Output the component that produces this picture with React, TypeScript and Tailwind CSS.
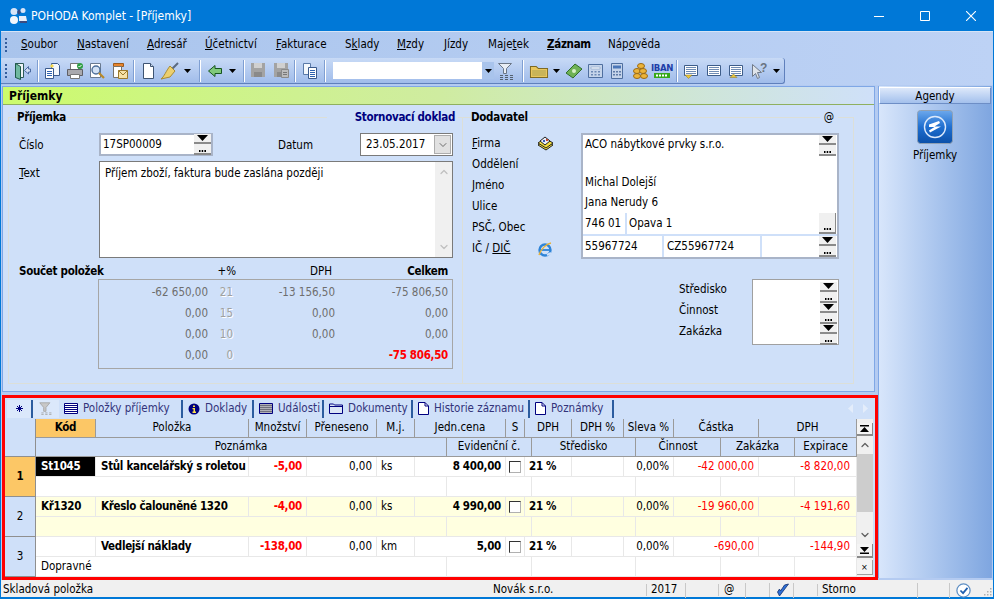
import type { ReactNode } from 'react';
import { ChevronDown, ChevronUp } from 'lucide-react';

function Pair() {
  return (
    <div className="flex w-[17px] flex-col">
      <div className="flex h-[10px] items-center justify-center border-b-2 border-[#8a8a8a] bg-[#f0f0f0]">
        <svg width="11" height="6" viewBox="0 0 11 6"><path d="M0 0h11L5.500 6z" fill="#000" /></svg>
      </div>
      <Dots />
    </div>
  );
}

function Dots() {
  return (
    <div className="flex h-[11px] items-end justify-center border-b-2 border-[#8a8a8a] bg-[#f0f0f0] pb-[1px]">
      <svg width="7" height="2" viewBox="0 0 7 2"><path d="M0 0h1.500v2H0zM2.700 0h1.500v2H2.700zM5.400 0H7v2H5.400z" fill="#000" /></svg>
    </div>
  );
}

function Caret() {
  return (
    <div className="flex h-[22px] w-[12px] items-center justify-center">
      <svg width="7" height="4" viewBox="0 0 7 4"><path d="M0 0h7L3.500 4z" fill="#000" /></svg>
    </div>
  );
}

function Sep({ className = '' }: { className?: string }) {
  return <div className={`mx-[2px] h-[22px] w-[2px] border-l border-r border-l-[#7f9fd2] border-r-white ${className}`} />;
}

function Tool({ children, className = 'w-[22px]' }: { children: ReactNode; className?: string }) {
  return <div className={`flex h-[22px] items-center justify-center ${className}`}>{children}</div>;
}

const outline = '#3a5a8c';

function DoorIcon() {
  return (
    <svg width="18" height="18" viewBox="0 0 18 18">
      <path d="M2.500 1.500h8v14h-8z" fill="#eef3f8" stroke="#2d5a58" />
      <path d="M2.500 1.500l5 3v13l-5-2z" fill="#6fb8a0" stroke="#1e5a48" />
      <path d="M11.500 8.500l4-4v2.500h2v3h-2V12z" fill="#cfdcf2" stroke="#4a6aa0" />
    </svg>
  );
}

function PropsIcon() {
  return (
    <svg width="18" height="18" viewBox="0 0 18 18">
      <path d="M8.500 1.500h6l2 2v10h-8z" fill="#f4f8fc" stroke={outline} />
      <path d="M2.500 6.500h8v10h-8z" fill="#fff" stroke={outline} />
      <path d="M4 9.500h5M4 11.500h5M4 13.500h5" stroke="#2e62b0" />
      <path d="M9 2l2 2-2 2-2-2z" fill="#f6d84a" />
    </svg>
  );
}

function PrintIcon() {
  return (
    <svg width="18" height="18" viewBox="0 0 18 18">
      <path d="M4.500 1.500h8v6h-8z" fill="#fff" stroke="#777" />
      <path d="M1.500 7.500h15v6h-15z" fill="#a9a9ae" stroke="#5f5f66" />
      <path d="M4.500 12.500h9v4h-9z" fill="#fff" stroke="#777" />
      <circle cx="14" cy="4" r="3" fill="#2f9e44" />
      <path d="M12.500 4l1 1 2-2" stroke="#fff" fill="none" />
    </svg>
  );
}

function PreviewIcon() {
  return (
    <svg width="18" height="18" viewBox="0 0 18 18">
      <path d="M2.500 1.500h10v14h-10z" fill="#fff" stroke="#6a7a90" />
      <circle cx="8" cy="8" r="4" fill="#d3e2f5" stroke="#4d6f9a" strokeWidth="1.400" />
      <path d="M11 11l5 5" stroke="#b8892a" strokeWidth="2.200" />
    </svg>
  );
}

function MailDocIcon() {
  return (
    <svg width="18" height="18" viewBox="0 0 18 18">
      <path d="M2.500 1.500h10v3h-10z" fill="#e8842c" stroke="#9c5a1c" />
      <path d="M2.500 4.500h8v11h-8z" fill="#fff" stroke="#77726a" />
      <path d="M7.500 8.500h9v8h-9z" fill="#f7e2a8" stroke="#9c7a2c" />
      <path d="M7.500 8.500l4.500 4.500 4.500-4.500" fill="none" stroke="#9c7a2c" />
    </svg>
  );
}

function PageIcon() {
  return (
    <svg width="18" height="18" viewBox="0 0 18 18">
      <path d="M4.500 1.500h7l3 3v12h-10z" fill="#fff" stroke="#3d5372" />
      <path d="M11.500 1.500v3h3" fill="#cad8ea" stroke="#3d5372" />
    </svg>
  );
}

function BroomIcon() {
  return (
    <svg width="20" height="18" viewBox="0 0 20 18">
      <path d="M12 7l6-6" stroke="#5a6a80" strokeWidth="2" />
      <path d="M10 4l5 5-5 6-9 2c3-2 5-8 9-13z" fill="#eccf6e" stroke="#a88b34" />
    </svg>
  );
}

function BackIcon() {
  return (
    <svg width="16" height="14" viewBox="0 0 16 14">
      <path d="M1.500 7L8 1.500v3h6.500v5H8v3z" fill="#7fc97a" stroke="#16541f" />
    </svg>
  );
}

function SaveIcon({ extra }: { extra?: boolean }) {
  return (
    <svg width="15" height="15" viewBox="0 0 15 15">
      <path d="M0 0h14v14H0z" fill="#a3a3a3" />
      <path d="M3 0h8v5H3z" fill="#d0d0d0" />
      <path d="M3 9h8v5H3z" fill="#8a8a8a" />
      {extra && <path d="M7.500 6.500h7v8h-7z" fill="#bcbcbc" stroke="#8a8a8a" />}
      {extra && <path d="M9 9.500h4M9 11.500h4" stroke="#777" />}
    </svg>
  );
}

function CopyIcon() {
  return (
    <svg width="18" height="18" viewBox="0 0 18 18">
      <path d="M2.500 1.500h7v11h-7z" fill="#f4f8fc" stroke="#5a7aa8" />
      <path d="M7.500 5.500h8v11h-8z" fill="#fff" stroke={outline} />
      <path d="M9 8.500h5M9 10.500h5M9 12.500h5M9 14.500h5" stroke="#2e62b0" />
    </svg>
  );
}

function FilterIcon() {
  return (
    <svg width="18" height="18" viewBox="0 0 18 18">
      <path d="M1.500 1.500h13l-5 5v5h-3v-5z" fill="#e8edf4" stroke="#6b7686" />
      <path d="M3 13.500h3M8 13.500h3M13 13.500h3M3 15.500h3M8 15.500h3M13 15.500h3M3 17.500h3M8 17.500h3M13 17.500h3" stroke="#54606e" />
    </svg>
  );
}

function FolderIcon() {
  return (
    <svg width="16" height="14" viewBox="0 0 16 14" className="scale-x-[1.15]">
      <path d="M.5 2.500h5l2 2h8v9H.5z" fill="#e9c65c" stroke="#7d6a24" />
      <path d="M2 6h12v6H2z" fill="#c9b458" />
    </svg>
  );
}

function MoneyIcon() {
  return (
    <svg width="18" height="18" viewBox="0 0 18 18">
      <path d="M1 11l9-9 7 5-9 9z" fill="#6fb255" stroke="#2f6d2a" />
      <circle cx="9" cy="9" r="2" fill="#d9f0c8" />
    </svg>
  );
}

function CalcIcon({ dark }: { dark?: boolean }) {
  if (dark) {
    return (
      <svg width="14" height="16" viewBox="0 0 14 16">
        <path d="M.5.500h11v15H.5z" fill="#c5d4ea" stroke="#4f6f9f" />
        <path d="M2 2.500h8v3H2z" fill="#4a76b8" />
        <path d="M2 8h2v1.500H2zM5 8h2v1.500H5zM8 8h2v1.500H8zM2 11h2v1.500H2zM5 11h2v1.500H5zM8 11h2v1.500H8z" fill="#5f7ba8" />
      </svg>
    );
  }
  return (
    <svg width="16" height="14" viewBox="0 0 16 14">
      <path d="M.5.500h14v13H.5z" fill="#c5d4ea" stroke="#4f6f9f" />
      <path d="M3 3h9v2H3z" fill="#eef3fa" stroke="#7a94bd" strokeWidth=".5" />
      <path d="M3 7h2v1.500H3zM6.500 7h2v1.500h-2zM10 7h2v1.500h-2zM3 10h2v1.500H3zM6.500 10h2v1.500h-2zM10 10h2v1.500h-2z" fill="#6d89b5" />
    </svg>
  );
}

function CoinsIcon() {
  return (
    <svg width="18" height="18" viewBox="0 0 18 18">
      <ellipse cx="10" cy="4" rx="3.500" ry="2.500" fill="#ecb43a" stroke="#9a6a14" />
      <ellipse cx="6" cy="9" rx="3.500" ry="2.500" fill="#ecb43a" stroke="#9a6a14" />
      <ellipse cx="12" cy="9" rx="3.500" ry="2.500" fill="#ecb43a" stroke="#9a6a14" />
      <ellipse cx="6" cy="14" rx="3.500" ry="2.500" fill="#ecb43a" stroke="#9a6a14" />
      <ellipse cx="13" cy="14" rx="3.500" ry="2.500" fill="#ecb43a" stroke="#9a6a14" />
    </svg>
  );
}

function IbanIcon() {
  return (
    <div className="flex flex-col items-center leading-none">
      <span className="text-[9.5px] font-bold tracking-[-0.4px] text-[#1f3fa8]">IBAN</span>
      <svg width="16" height="5" viewBox="0 0 16 5" className="mt-[1px]">
        <path d="M0 0h16v5H0z" fill="#36a818" />
        <path d="M2 1.500h2v2H2zM5 1.500h2v2H5zM8 1.500h2v2H8zM11 1.500h2v2h-2z" fill="#fff" />
      </svg>
    </div>
  );
}

function ListIcon({ marker }: { marker?: 'down' | 'up' }) {
  return (
    <svg width="16" height="16" viewBox="0 0 16 16">
      <path d="M1.500 2.500h13v10h-13z" fill="#fff" stroke="#3d5d8a" />
      <path d="M3 4.500h10M3 6.500h10M3 8.500h10M3 10.500h10" stroke="#6f8cb4" />
      {marker === 'down' && <path d="M2 12h7l-3.500 3.500z" fill="#e8c53c" stroke="#8c7620" strokeWidth=".5" />}
      {marker === 'up' && <path d="M2 14.500h7L5.500 11z" fill="#e8c53c" stroke="#8c7620" strokeWidth=".5" />}
    </svg>
  );
}

function HelpIcon() {
  return (
    <svg width="18" height="18" viewBox="0 0 18 18">
      <path d="M2.500 2.500v12l3-3 2 5 2-1-2-5h4z" fill="#dfe4ea" stroke="#707a88" />
      <text x="10" y="10" fontSize="12" fontWeight="700" fill="#6a7482" fontFamily="Liberation Sans, sans-serif">?</text>
    </svg>
  );
}

function CardsIcon() {
  return (
    <svg width="17" height="17" viewBox="0 0 17 17">
      <path d="M1 10l7-5 8 5-7 5z" fill="#f2dc3c" stroke="#222" />
      <path d="M1 8l7-5 8 5-7 5z" fill="#f2dc3c" stroke="#222" />
      <path d="M3 6l5-4 5 4-5 4z" fill="#e8eefa" stroke="#222" />
      <path d="M6 5h2v2H6z" fill="#3a5ab8" />
      <path d="M9 4h2v2H9z" fill="#c8452c" />
    </svg>
  );
}

function IeIcon() {
  return (
    <svg width="16" height="16" viewBox="0 0 16 16">
      <circle cx="8" cy="9" r="5.500" fill="none" stroke="#2e84d8" strokeWidth="2.400" />
      <path d="M3 9h11" stroke="#2e84d8" strokeWidth="1.800" />
      <path d="M10 14l4-2" stroke="#cfe0f9" strokeWidth="2" />
      <path d="M2 14c2-6 7-11 12-12" fill="none" stroke="#e8b23a" strokeWidth="1.400" />
    </svg>
  );
}

function AgendaIcon() {
  return (
    <svg width="36" height="34" viewBox="0 0 36 34">
      <defs>
        <linearGradient id="ag" x1="0" y1="0" x2="0" y2="1">
          <stop offset="0" stopColor="#6da8ec" />
          <stop offset=".5" stopColor="#1f6fd0" />
          <stop offset="1" stopColor="#0b4fa8" />
        </linearGradient>
      </defs>
      <rect x=".5" y=".5" width="35" height="33" rx="3" fill="url(#ag)" stroke="#8fa0b4" />
      <circle cx="18" cy="17" r="10.500" fill="none" stroke="#dce9fb" strokeWidth="1.400" />
      <path d="M12 14.500l10-3.500 1 2-5.500 3.500H24l-11 6-1-2 5.500-3.500H12z" fill="#fff" />
    </svg>
  );
}

function TabIcon({ kind }: { kind: string }) {
  if (kind === 'lines') {
    return (
      <svg width="14" height="11" viewBox="0 0 14 11">
        <path d="M.5.500h13v10H.5z" fill="#fff" stroke="#00007f" />
        <path d="M1 2.500h12M1 4.500h12M1 6.500h12M1 8.500h12" stroke="#00007f" />
      </svg>
    );
  }
  if (kind === 'info') {
    return (
      <svg width="12" height="12" viewBox="0 0 12 12">
        <circle cx="6" cy="6" r="5.500" fill="#00007f" />
        <path d="M5 2.500h2v1.500H5zM4.500 5H7v3.500h1V10H4.500V8.500h1V6.300h-1z" fill="#ffe14a" />
      </svg>
    );
  }
  if (kind === 'gray') {
    return (
      <svg width="14" height="11" viewBox="0 0 14 11">
        <path d="M.5.500h13v10H.5z" fill="#b0b0b8" stroke="#00007f" />
        <path d="M1 2.500h12M1 4.500h12M1 6.500h12M1 8.500h12" stroke="#70707c" />
      </svg>
    );
  }
  if (kind === 'folder') {
    return (
      <svg width="14" height="11" viewBox="0 0 14 11">
        <path d="M.5 2V1h4l1 1h8v8.500H.5z" fill="#dbe5f5" stroke="#00007f" />
        <path d="M1 3.500h12" stroke="#00007f" />
      </svg>
    );
  }
  return (
    <svg width="11" height="13" viewBox="0 0 11 13">
      <path d="M.5.500h6.500l3.500 3.500v8.500H.5z" fill="#fff" stroke="#00007f" />
      <path d="M7 .5V4h3.500" fill="none" stroke="#00007f" />
    </svg>
  );
}

const menu: [ReactNode, string, string?][] = [
  [<><u>S</u>oubor</>, 'w-[56px]'],
  [<><u>N</u>astavení</>, 'w-[70px]'],
  [<><u>A</u>dresář</>, 'w-[58px]'],
  [<><u>Ú</u>četnictví</>, 'w-[71px]'],
  [<><u>F</u>akturace</>, 'w-[69px]'],
  [<>S<u>k</u>lady</>, 'w-[52px]'],
  [<><u>M</u>zdy</>, 'w-[47px]'],
  [<><u>J</u>ízdy</>, 'w-[44px]'],
  [<>Maje<u>t</u>ek</>, 'w-[59px]'],
  [<><u>Z</u>áznam</>, 'w-[61px]', 'font-bold tracking-[-0.3px]'],
  [<>Náp<u>o</u>věda</>, 'w-[70px]'],
];

const tabs = [
  { icon: 'lines', label: 'Položky příjemky', w: 'w-[124px]' },
  { icon: 'info', label: 'Doklady', w: 'w-[71px]' },
  { icon: 'gray', label: 'Události', w: 'w-[70px]' },
  { icon: 'folder', label: 'Dokumenty', w: 'w-[89px]' },
  { icon: 'doc', label: 'Historie záznamu', w: 'w-[117px]' },
  { icon: 'doc', label: 'Poznámky', w: 'w-[84px]' },
];

const topCols = 'grid-cols-[60px_153px_58px_70px_38px_91px_19px_47px_52px_50px_85px_98px]';
const bottomCols = 'grid-cols-[411px_85px_104px_85px_74px_62px]';

const head1 = ['Kód', 'Položka', 'Množství', 'Přeneseno', 'M.j.', 'Jedn.cena', 'S', 'DPH', 'DPH %', 'Sleva %', 'Částka', 'DPH'];
const head2 = ['Poznámka', 'Evidenční č.', 'Středisko', 'Činnost', 'Zakázka', 'Expirace'];

const rows = [
  { n: '1', kod: 'St1045', name: 'Stůl kancelářský s roletou', qty: '-5,00', mj: 'ks', price: '8 400,00', sum: '-42 000,00', dph: '-8 820,00', note: '', bg: 'bg-white' },
  { n: '2', kod: 'Kř1320', name: 'Křeslo čalouněné 1320', qty: '-4,00', mj: 'ks', price: '4 990,00', sum: '-19 960,00', dph: '-4 191,60', note: '', bg: 'bg-[#ffffe0]' },
  { n: '3', kod: '', name: 'Vedlejší náklady', qty: '-138,00', mj: 'km', price: '5,00', sum: '-690,00', dph: '-144,90', note: 'Dopravné', bg: 'bg-white' },
];

const totals = [
  ['-62 650,00', '21', '-13 156,50', '-75 806,50'],
  ['0,00', '15', '0,00', '0,00'],
  ['0,00', '10', '0,00', '0,00'],
  ['0,00', '0', '', ''],
];

const cell = 'flex h-[20px] items-center whitespace-nowrap border-b border-r border-[#e8e8e8] px-[4px]';
const bold = 'font-bold tracking-[-0.3px]';

function HeadCell({ label, active }: { label: string; active?: boolean }) {
  return (
    <div
      className={`flex h-[19px] items-center justify-center border-b border-r border-[#9a9a9a] ${
        active ? `bg-[#fcc766] ${bold}` : 'bg-[#cfe0f9]'
      }`}
    >
      {label}
    </div>
  );
}

function GridRow({ row, selected }: { row: (typeof rows)[number]; selected: boolean }) {
  return (
    <div className="flex h-[40px]">
      <div
        className={`flex w-[31px] items-center justify-center border-b border-r border-[#8f8f8f] ${
          selected ? 'bg-[#fcc766] font-bold' : 'bg-[#cfe0f9]'
        }`}
      >
        {row.n}
      </div>
      <div className={`w-[821px] ${row.bg}`}>
        <div className={`grid ${topCols}`}>
          <div className={`${cell} ${bold} pl-[5px] ${selected ? 'bg-black text-white' : ''}`}>{row.kod}</div>
          <div className={`${cell} ${bold} pl-[5px]`}>{row.name}</div>
          <div className={`${cell} justify-end ${bold} text-[#ff0000]`}>{row.qty}</div>
          <div className={`${cell} justify-end`}>0,00</div>
          <div className={cell}>{row.mj}</div>
          <div className={`${cell} justify-end ${bold}`}>{row.price}</div>
          <div className={`${cell} justify-center !px-0`}>
            <div className="h-[12px] w-[12px] border border-b-[#b0b0b0] border-l-[#333] border-r-[#b0b0b0] border-t-[#333] bg-white" />
          </div>
          <div className={`${cell} ${bold}`}>21 %</div>
          <div className={cell} />
          <div className={`${cell} justify-end`}>0,00%</div>
          <div className={`${cell} justify-end text-[#ff0000]`}>{row.sum}</div>
          <div className={`${cell} justify-end pr-[6px] text-[#ff0000]`}>{row.dph}</div>
        </div>
        <div className={`grid ${bottomCols}`}>
          <div className={`${cell} pl-[5px]`}>{row.note}</div>
          <div className={cell} />
          <div className={cell} />
          <div className={cell} />
          <div className={cell} />
          <div className={cell} />
        </div>
      </div>
    </div>
  );
}

function GridScroll() {
  return (
    <div className="flex w-[16px] flex-col items-center bg-[#f0f0f0] pt-[4px]">
      <div className="flex h-[13px] w-[16px] flex-col items-center justify-center border-b-2 border-r border-[#8a8a8a] bg-[#f4f4f4]">
        <svg width="9" height="7" viewBox="0 0 9 7"><path d="M0 0h9v1.500H0zM4.500 2L9 7H0z" fill="#000" /></svg>
      </div>
      <ChevronUp size={12} strokeWidth={2.5} className="mt-[3px] text-[#606060]" />
      <div className="mt-[3px] h-[58px] w-[16px] bg-[#cdcdcd]" />
      <div className="flex-1" />
      <ChevronDown size={12} strokeWidth={2.5} className="text-[#606060]" />
      <div className="mt-[3px] flex h-[14px] w-[16px] flex-col items-center justify-center border-b-2 border-r border-[#8a8a8a] bg-[#f4f4f4]">
        <svg width="9" height="7" viewBox="0 0 9 7"><path d="M0 0h9L4.500 5zM0 5.500h9V7H0z" fill="#000" /></svg>
      </div>
      <div className="mb-[2px] mt-[2px] flex h-[15px] w-[16px] items-center justify-center border-b border-r border-[#a0a0a0] bg-[#f4f4f4] text-[9px] leading-none">×</div>
    </div>
  );
}

function Grip() {
  return (
    <div className="flex w-[2px] flex-col gap-[2px]">
      <i className="h-[2px] w-[2px] bg-[#345d9c]" />
      <i className="h-[2px] w-[2px] bg-[#345d9c]" />
      <i className="h-[2px] w-[2px] bg-[#345d9c]" />
      <i className="h-[2px] w-[2px] bg-[#345d9c]" />
    </div>
  );
}

export default function App() {
  return (
    <div className="flex h-[599px] w-[994px] flex-col overflow-hidden bg-[#0078d7] font-['DejaVu_Sans_Condensed','DejaVu_Sans',sans-serif] text-[11.5px] leading-none text-black [font-stretch:condensed]">
      {/* title bar */}
      <div className="flex h-[31px] items-center text-white">
        <svg width="19" height="18" viewBox="0 0 19 18" className="ml-[9px] mr-[3px]">
          <circle cx="5" cy="4.500" r="3.500" fill="#d8e4f8" />
          <path d="M10 2l2 3-2 3-2-3z" fill="#3a4a80" />
          <circle cx="14" cy="3.500" r="2.500" fill="#d8e4f8" />
          <circle cx="5" cy="13" r="4" fill="#f2f6fc" />
          <path d="M10 9h7l1 5h-8z" fill="#e8eefa" />
          <path d="M11 14h7v2h-7z" fill="#3a4a80" />
        </svg>
        <span className="text-[12px]">POHODA Komplet - [Příjemky]</span>
        <div className="ml-auto flex items-center">
          <div className="flex w-[46px] justify-center">
            <svg width="10" height="10" viewBox="0 0 10 10"><path d="M0 5.500h10" stroke="#fff" /></svg>
          </div>
          <div className="flex w-[46px] justify-center">
            <svg width="10" height="10" viewBox="0 0 10 10"><path d="M.5.500h9v9h-9z" fill="none" stroke="#fff" /></svg>
          </div>
          <div className="flex w-[46px] justify-center">
            <svg width="10" height="10" viewBox="0 0 10 10"><path d="M0 0l10 10M10 0L0 10" stroke="#fff" strokeWidth="1.100" /></svg>
          </div>
        </div>
      </div>

      <div className="mx-[1px] flex min-h-0 flex-1 flex-col border-t border-[#d6e4f6] bg-[#b4cbf1]">
        {/* menu */}
        <div className="flex h-[26px] items-center bg-gradient-to-r from-[#a9c4ec] to-[#bdd2f5]">
          <div className="ml-[4px] mr-[14px]"><Grip /></div>
          {menu.map(([label, w, extra], i) => (
            <span key={i} className={`${w} ${extra ?? ''}`}>{label}</span>
          ))}
        </div>

        {/* toolbar */}
        <div className="flex h-[27px] items-stretch bg-gradient-to-r from-[#a9c4ec] to-[#bdd2f5]">
          <div className="flex h-[26px] w-[784px] items-center rounded-r-[3px] border-b border-r border-[#5f80bc] bg-gradient-to-b from-[#c8daf6] to-[#a0bcea] pl-[4px]">
            <div className="mr-[4px]"><Grip /></div>
            <Tool><DoorIcon /></Tool>
            <Sep className="ml-[4px]" />
            <Tool className="w-[22.5px]"><PropsIcon /></Tool>
            <Tool className="w-[22.5px]"><PrintIcon /></Tool>
            <Tool className="w-[22.5px]"><PreviewIcon /></Tool>
            <Tool className="w-[22.5px]"><MailDocIcon /></Tool>
            <Sep />
            <Tool><PageIcon /></Tool>
            <Tool><BroomIcon /></Tool>
            <Caret />
            <Sep className="ml-[6px]" />
            <Tool className="ml-[1px] w-[22px]"><BackIcon /></Tool>
            <Caret />
            <Sep className="ml-[5px]" />
            <Tool><SaveIcon /></Tool>
            <Tool className="ml-[1px] w-[22px]"><SaveIcon extra /></Tool>
            <Sep />
            <Tool className="ml-[1px] w-[22px]"><CopyIcon /></Tool>
            <Sep className="ml-[3px]" />
            <div className="ml-[5px] flex h-[17px] w-[161px] justify-end bg-white">
              <div className="flex w-[12px] items-center justify-center bg-[#a9c4ec]">
                <svg width="7" height="4" viewBox="0 0 7 4"><path d="M0 0h7L3.500 4z" fill="#000" /></svg>
              </div>
            </div>
            <Tool className="ml-[1px] w-[22px]"><FilterIcon /></Tool>
            <Sep className="ml-[5px]" />
            <Tool className="ml-[2px] w-[22px]"><FolderIcon /></Tool>
            <Caret />
            <Tool className="ml-[1px] w-[22px]"><MoneyIcon /></Tool>
            <Tool><CalcIcon /></Tool>
            <Tool><CalcIcon dark /></Tool>
            <Tool><CoinsIcon /></Tool>
            <Tool><IbanIcon /></Tool>
            <Sep className="ml-[3px]" />
            <Tool><ListIcon marker="down" /></Tool>
            <Tool className="ml-[1px] w-[22px]"><ListIcon /></Tool>
            <Tool><ListIcon marker="up" /></Tool>
            <Tool className="ml-[1px] w-[22px]"><HelpIcon /></Tool>
            <Caret />
          </div>
        </div>

        {/* body */}
        <div className="flex min-h-0 flex-1 pl-[1px] pt-[1px]">
          <div className="flex w-[876px] flex-col">
            {/* form */}
            <div className="flex h-[306px] w-[873px] flex-col border border-[#7fa7e6] bg-[#cfe0f9]">
              <div className="flex h-[18px] items-center border-b border-[#8fb05f] bg-gradient-to-r from-[#ccfb6b] via-[#cfeca0] to-[#cfe0f9] pl-[6px] text-[12px] font-bold">
                Příjemky
              </div>
              <div className="flex pl-[5px] pt-[12px]">
                {/* left group */}
                <div className="h-[267px] w-[455px] border border-[#dcdfd8]">
                  <div className="-mt-[8px] flex h-[16px] items-center pl-[7px] pr-[4px]">
                    <span className={`bg-[#cfe0f9] px-[1px] ${bold}`}>Příjemka</span>
                    <span className={`ml-auto bg-[#cfe0f9] pl-[28px] pr-[3px] ${bold} text-[#00007f]`}>Stornovací doklad</span>
                  </div>
                  <div className="mt-[7px] flex h-[23px]">
                    <span className="w-[90px] pl-[10px] pt-[7px]">Číslo</span>
                    <div className="flex h-[23px] w-[114px] items-center justify-between border-2 border-[#a9b4c8] bg-white pl-[2px]">
                      <span>17SP00009</span>
                      <Pair />
                    </div>
                    <span className="ml-[65px] w-[82px] pt-[7px]">Datum</span>
                    <div className="flex h-[23px] w-[93px] items-center justify-between border border-[#7a7a7a] bg-white pl-[5px] pr-[1px]">
                      <span>23.05.2017</span>
                      <div className="flex h-[19px] w-[17px] items-center justify-center border border-[#adadad] bg-[#e1e1e1]">
                        <ChevronDown size={12} strokeWidth={1.5} className="text-[#444]" />
                      </div>
                    </div>
                  </div>
                  <div className="mt-[5px] flex h-[97px]">
                    <span className="w-[90px] pl-[10px] pt-[7px]"><u>T</u>ext</span>
                    <div className="flex w-[354px] justify-between border border-[#7a7a7a] bg-white">
                      <span className="pl-[5px] pt-[6px]">Příjem zboží, faktura bude zaslána později</span>
                      <div className="flex w-[17px] flex-col items-center justify-between bg-[#f0f0f0] py-[4px] text-[#c0c0c0]">
                        <ChevronUp size={12} strokeWidth={2.5} />
                        <ChevronDown size={12} strokeWidth={2.5} />
                      </div>
                    </div>
                  </div>
                  <div className="mt-[6px] flex h-[15px] items-center">
                    <span className={`w-[175px] pl-[10px] ${bold}`}>Součet položek</span>
                    <span className="w-[52px] text-right">+%</span>
                    <span className="w-[96px] text-right">DPH</span>
                    <span className={`w-[116px] text-right ${bold}`}>Celkem</span>
                  </div>
                  <div className="ml-[89px] flex h-[90px] w-[355px] flex-col border border-[#a6a6a6] pb-[1px] pr-[4px] pt-[2px] text-[#6e6e6e]">
                    {totals.map((t, i) => (
                      <div key={i} className="flex h-[21px] items-center">
                        <span className="w-[109px] text-right">{t[0]}</span>
                        <span className="w-[25px] text-right text-[#a0a0a0] [text-shadow:1px_1px_0_#fff]">{t[1]}</span>
                        <span className="w-[102px] text-right">{t[2]}</span>
                        <span className={`flex-1 text-right ${i === 3 ? `${bold} text-[#ff0000]` : ''}`}>
                          {i === 3 ? '-75 806,50' : t[3]}
                        </span>
                      </div>
                    ))}
                  </div>
                </div>

                {/* right group */}
                <div className="h-[267px] w-[391px] border-b border-r border-t border-[#dcdfd8]">
                  <div className="-mt-[8px] flex h-[16px] items-center pl-[8px]">
                    <span className={`bg-[#cfe0f9] pr-[1px] ${bold}`}>Dodavatel</span>
                    <span className="ml-auto mr-[15px] bg-[#cfe0f9] px-[4px]">@</span>
                  </div>
                  <div className="mt-[7px] flex">
                    <div className="w-[118px] pl-[9px]">
                      {[
                        [<><u>F</u>irma</>, <CardsIcon key="c" />],
                        ['Oddělení', null],
                        ['Jméno', null],
                        ['Ulice', null],
                        ['PSČ, Obec', null],
                        [<>IČ / <u>DIČ</u></>, <IeIcon key="i" />],
                      ].map(([label, icon], i) => (
                        <div key={i} className="flex h-[21px] items-center">
                          <span className="w-[65px]">{label}</span>
                          {icon}
                        </div>
                      ))}
                    </div>
                    <div className="flex h-[126px] w-[258px] flex-col border-2 border-[#a9b4c8] bg-white">
                      <div className="flex h-[39px] justify-between pl-[2px] pr-[1px]">
                        <span className="pt-[4px]">ACO nábytkové prvky s.r.o.</span>
                        <Pair />
                      </div>
                      <div className="flex h-[20px] items-center pl-[2px]">Michal Dolejší</div>
                      <div className="flex h-[21px] items-center pl-[2px]">Jana Nerudy 6</div>
                      <div className="flex h-[22px]">
                        <span className="flex w-[44px] items-center border-r-2 border-[#cfe0f9] pl-[2px]">746 01</span>
                        <span className="flex flex-1 items-center pl-[2px]">Opava 1</span>
                        <div className="mr-[1px] flex h-[21px] w-[17px] items-end justify-center border-b-2 border-r border-[#8a8a8a] bg-[#f0f0f0] pb-[2px]">
                          <svg width="7" height="2" viewBox="0 0 7 2"><path d="M0 0h1.500v2H0zM2.700 0h1.500v2H2.700zM5.400 0H7v2H5.400z" fill="#000" /></svg>
                        </div>
                      </div>
                      <div className="flex flex-1 border-t-2 border-[#cfe0f9]">
                        <span className="flex w-[81px] items-center border-r-2 border-[#cfe0f9] pl-[2px]">55967724</span>
                        <span className="flex w-[98px] items-center border-r-2 border-[#cfe0f9] pl-[3px]">CZ55967724</span>
                        <div className="ml-auto mr-[1px]"><Pair /></div>
                      </div>
                    </div>
                  </div>
                  <div className="mt-[20px] flex">
                    <div className="ml-[216px] w-[73px]">
                      <div className="flex h-[21px] items-center">Středisko</div>
                      <div className="flex h-[21px] items-center">Činnost</div>
                      <div className="flex h-[21px] items-center">Zakázka</div>
                    </div>
                    <div className="flex h-[66px] w-[87px] flex-col items-end border border-[#a0a0a0] bg-white pr-[1px] pt-[2px]">
                      <Pair />
                      <Pair />
                      <Pair />
                    </div>
                  </div>
                </div>
              </div>
            </div>

            {/* items */}
            <div className="mt-[3px] flex h-[185px] w-[876px] flex-col border-[3px] border-[#ff0000] bg-[#cfe0f9]">
              <div className="flex h-[21px] items-center text-[#33337a]">
                <div className="ml-[2px] flex h-[18px] w-[26px] items-center justify-center border-r-2 border-[#2b5c9f] bg-[#dbe8fb]">
                  <svg width="7" height="7" viewBox="0 0 7 7"><path d="M3.500 0v7M0 3.500h7M1 1l5 5M6 1L1 6" stroke="#00007f" /></svg>
                </div>
                <div className="flex h-[18px] w-[26px] items-center justify-center bg-[#dbe8fb]">
                  <svg width="14" height="14" viewBox="0 0 18 18"><path d="M1 1h13L9 7v5H6V7z" fill="#c8c8c8" stroke="#a0a0a0" /><path d="M3 14h3M8 14h3M13 14h3M3 16h3M8 16h3M13 16h3" stroke="#a0a0a0" /></svg>
                </div>
                {tabs.map((t) => (
                  <div key={t.label} className={`flex h-[18px] items-center gap-[5px] border-r-2 border-[#2b5c9f] pl-[5px] ${t.w}`}>
                    <TabIcon kind={t.icon} />
                    <span className="whitespace-nowrap">{t.label}</span>
                  </div>
                ))}
                <div className="ml-auto flex items-center gap-[10px] pr-[7px]">
                  <svg width="5" height="9" viewBox="0 0 5 9"><path d="M5 0v9L0 4.500z" fill="#e4edfb" /></svg>
                  <svg width="5" height="9" viewBox="0 0 5 9"><path d="M0 0v9l5-4.500z" fill="#e4edfb" /></svg>
                </div>
              </div>
              <div className="flex flex-1">
                <div className="w-[852px]">
                  <div className="flex">
                    <div className="h-[38px] w-[31px] border-b border-r border-[#8f8f8f] bg-[#cfe0f9]" />
                    <div className="w-[821px]">
                      <div className={`grid ${topCols}`}>
                        {head1.map((h, i) => <HeadCell key={i} label={h} active={i === 0} />)}
                      </div>
                      <div className={`grid ${bottomCols}`}>
                        {head2.map((h) => <HeadCell key={h} label={h} />)}
                      </div>
                    </div>
                  </div>
                  {rows.map((r, i) => <GridRow key={r.n} row={r} selected={i === 0} />)}
                </div>
                <GridScroll />
              </div>
            </div>
          </div>

          {/* agendy */}
          <div className="flex h-[492px] w-[114px] flex-col border-l border-r border-[#7fa7e6] bg-gradient-to-r from-[#d8e6fb] to-[#7fa6e0] pt-[1px]">
            <div className="flex h-[17px] items-center justify-center border border-b-[#6d8ec6] border-l-white border-r-[#6d8ec6] border-t-white bg-gradient-to-b from-[#dde8fa] to-[#a3c0ec] pt-[3px]">
              Agendy
            </div>
            <div className="mt-[6px] flex justify-center"><AgendaIcon /></div>
            <div className="mt-[6px] text-center">Příjemky</div>
          </div>
        </div>

        {/* status bar */}
        <div className="flex h-[17px] items-center bg-[#f0f0f0] pt-[3px]">
          <span className="w-[491px] pl-[2px]">Skladová položka</span>
          <span className="w-[154px] pl-[1px]">Novák s.r.o.</span>
          <span className="w-[39px] border-l border-[#c8c8c8] pl-[4px]">2017</span>
          <span className="h-[15px] w-[33px] border-l border-[#c8c8c8]" />
          <span className="w-[27px] border-l border-[#c8c8c8] pl-[5px]">@</span>
          <span className="h-[15px] w-[24px] border-l border-[#c8c8c8]" />
          <span className="flex w-[24px] justify-center border-l border-[#c8c8c8] pl-[3px]">
            <svg width="14" height="14" viewBox="0 0 13 14"><path d="M1 9l2 4 9-12-4 1-4 6-1-2z" fill="#2d6fd8" stroke="#12306e" strokeWidth=".8" /></svg>
          </span>
          <span className="h-[15px] w-[24px] border-l border-[#c8c8c8]" />
          <span className="w-[100px] border-l border-[#c8c8c8] pl-[4px]">Storno</span>
          <span className="h-[15px] w-[32px] border-l border-[#c8c8c8]" />
          <span className="flex w-[28px] items-center justify-center border-l border-[#c8c8c8]">
            <svg width="15" height="15" viewBox="0 0 17 17">
              <circle cx="8.500" cy="8.500" r="7.500" fill="#fff" stroke="#5f8fc4" strokeWidth="1.400" />
              <path d="M5 8.500l3 3 5-6" fill="none" stroke="#1f5fb0" strokeWidth="2" />
            </svg>
          </span>
          <svg width="10" height="10" viewBox="0 0 10 10" className="ml-auto mr-[1px] self-end">
            <path d="M8 1h1.500v1.500H8zM5 4h1.500v1.500H5zM8 4h1.500v1.500H8zM2 7h1.500v1.500H2zM5 7h1.500v1.500H5zM8 7h1.500v1.500H8z" fill="#b0b0b0" />
          </svg>
        </div>
      </div>
      <div className="h-[2px]" />
    </div>
  );
}
